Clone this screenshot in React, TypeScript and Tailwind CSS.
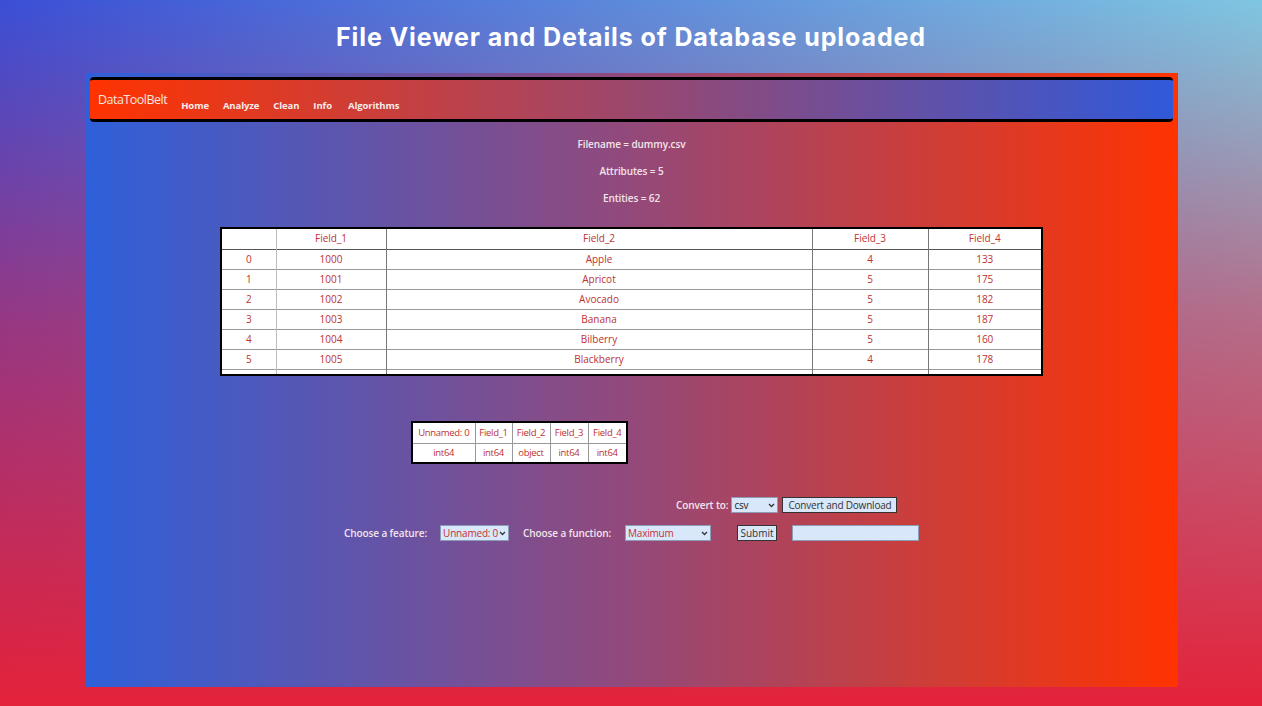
import React from 'react';

const ROWS = [
  ['0', '1000', 'Apple', '4', '133'],
  ['1', '1001', 'Apricot', '5', '175'],
  ['2', '1002', 'Avocado', '5', '182'],
  ['3', '1003', 'Banana', '5', '187'],
  ['4', '1004', 'Bilberry', '5', '160'],
  ['5', '1005', 'Blackberry', '4', '178'],
  ['6', '1006', 'Blackcurrant', '5', '183'],
  ['7', '1007', 'Blueberry', '5', '190'],
];

const DTYPES = [
  ['Unnamed: 0', 'int64', 'w-[62px]'],
  ['Field_1', 'int64', 'w-[37px]'],
  ['Field_2', 'object', 'w-[38px]'],
  ['Field_3', 'int64', 'w-[38px]'],
  ['Field_4', 'int64', 'w-[38px]'],
];

const NAV = ['Home', 'Analyze', 'Clean', 'Info', 'Algorithms'];

const LABEL = 'text-[10px] font-semibold text-[#f3e4ea] tracking-[-0.1px]';
const CONTROL = 'h-[16px] bg-[#d9e7fb] border border-[#8c9bb8] text-[10px] leading-none flex items-center whitespace-nowrap';

function Chevron() {
  return (
    <svg width="7" height="5" viewBox="0 0 7 5" className="shrink-0">
      <path d="M1 1l2.5 2.5L6 1" fill="none" stroke="#333" strokeWidth="1.3" />
    </svg>
  );
}

function FakeSelect({ value, width, red }: { value: string; width: string; red?: boolean }) {
  return (
    <div className={`${CONTROL} ${width} justify-between px-[2px] tracking-[-0.2px] ${red ? 'text-[#c53030]' : 'text-[#222]'}`}>
      <span>{value}</span>
      <Chevron />
    </div>
  );
}

export default function App() {
  return (
    <div className="w-[1262px] h-[706px] overflow-hidden flex flex-col bg-[linear-gradient(to_bottom,rgba(228,34,58,0)_0%,rgba(224,36,64,0.55)_45%,rgba(228,34,58,1)_100%),linear-gradient(to_right,#3a4fd6,#7fc6e1)] font-['Open_Sans',sans-serif]">
      <div className="h-[73px] pt-[3px] flex items-center justify-center">
        <h1 className="text-[25px] font-bold text-white font-['Inter',sans-serif] tracking-[0.9px]">File Viewer and Details of Database uploaded</h1>
      </div>

      <div className="ml-[85px] w-[1093px] h-[614px] bg-[linear-gradient(to_right,#2e60da,#93497a_50%,#ff3300)] flex flex-col">
        <nav className="mt-[4px] mx-[5px] h-[45px] border-y-[3px] border-black rounded-[4px] bg-[linear-gradient(to_right,#ff3300,#b04458_40%,#3059d9)] flex items-center pl-[8px]">
          <span className="text-[12.5px] text-[#f7e4df] tracking-[-0.5px] mt-[2px]">DataToolBelt</span>
          <div className="flex gap-[14px] ml-[14px] mt-[14px]">
            {NAV.map(n => (
              <span key={n} className={`text-[9.5px] font-bold text-[#f7ecec] tracking-[-0.1px] ${n === 'Algorithms' ? 'ml-[2px]' : ''}`}>{n}</span>
            ))}
          </div>
        </nav>

        <div className="flex flex-col items-center mt-[15px] gap-[13px]">
          <p className={`${LABEL} leading-[14px]`}>Filename = dummy.csv</p>
          <p className={`${LABEL} leading-[14px]`}>Attributes = 5</p>
          <p className={`${LABEL} leading-[14px]`}>Entities = 62</p>
        </div>

        <div className="mx-auto mt-[22px] w-[823px] h-[149px] overflow-hidden bg-white border-2 border-black">
          <table className="w-full table-fixed border-collapse text-[10px] font-medium text-[#c0302f] text-center">
            <thead>
              <tr className="h-[20px] border-b border-[#555]">
                <th className="w-[54px] font-medium border-r border-[#bbb]"></th>
                <th className="w-[110px] font-medium border-r border-[#777]">Field_1</th>
                <th className="w-[426px] font-medium border-r border-[#777]">Field_2</th>
                <th className="w-[116px] font-medium border-r border-[#777]">Field_3</th>
                <th className="font-medium">Field_4</th>
              </tr>
            </thead>
            <tbody>
              {ROWS.map(r => (
                <tr key={r[0]} className="h-[20px] border-b border-[#999]">
                  <td className="border-r border-[#bbb]">{r[0]}</td>
                  <td className="border-r border-[#777]">{r[1]}</td>
                  <td className="border-r border-[#777]">{r[2]}</td>
                  <td className="border-r border-[#777]">{r[3]}</td>
                  <td>{r[4]}</td>
                </tr>
              ))}
            </tbody>
          </table>
        </div>

        <div className="ml-[326px] mt-[45px] w-[217px] bg-white border-2 border-black">
          <table className="w-full table-fixed border-collapse text-[9.5px] font-medium tracking-[-0.3px] text-[#c0302f] text-center">
            <tbody>
              <tr className="h-[20px] border-b border-[#999]">
                {DTYPES.map(d => (
                  <td key={d[0]} className={`${d[2]} px-0 border-r border-[#999] last:border-r-0 whitespace-nowrap`}>{d[0]}</td>
                ))}
              </tr>
              <tr className="h-[19px]">
                {DTYPES.map(d => (
                  <td key={d[0]} className="border-r border-[#999] last:border-r-0">{d[1]}</td>
                ))}
              </tr>
            </tbody>
          </table>
        </div>

        <div className="ml-[591px] mt-[33px] flex items-center">
          <span className={LABEL}>Convert to:</span>
          <div className="ml-[3px]"><FakeSelect value="csv" width="w-[47px]" /></div>
          <button className={`${CONTROL} ml-[4px] w-[115px] justify-center border-[#333] text-[#333] tracking-[-0.2px]`}>Convert and Download</button>
        </div>

        <div className="mt-[12px] flex items-center justify-center">
          <span className={LABEL}>Choose a feature:</span>
          <div className="ml-[13px]"><FakeSelect value="Unnamed: 0" width="w-[69px]" red /></div>
          <span className={`${LABEL} ml-[14px]`}>Choose a function:</span>
          <div className="ml-[14px]"><FakeSelect value="Maximum" width="w-[86px]" red /></div>
          <button className={`${CONTROL} ml-[26px] w-[40px] justify-center border-[#333] text-[#333]`}>Submit</button>
          <input className={`${CONTROL} ml-[15px] w-[127px] outline-none`} />
        </div>
      </div>
    </div>
  );
}
